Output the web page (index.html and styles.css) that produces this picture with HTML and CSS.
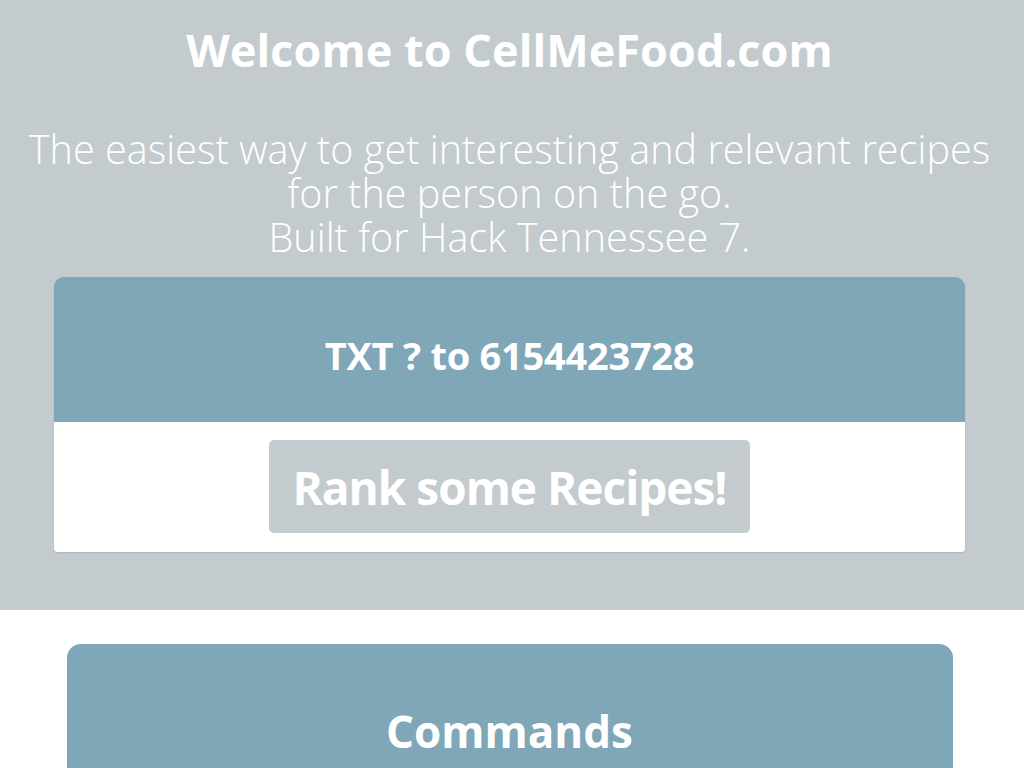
FILE: index.html
```html
<!DOCTYPE html>
<html lang="en">
<head>
<meta charset="utf-8">
<title>CellMeFood</title>
<link rel="stylesheet" href="styles.css">
</head>
<body>
  <header class="hero">
    <div class="hero-inner">
      <h1 class="hero-title">Welcome to CellMeFood.com</h1>
      <p class="hero-text">The easiest way to get interesting and relevant recipes<br>for the person on the go.<br>Built for Hack Tennessee 7.</p>
      <section class="card">
        <div class="card-head">TXT ? to 6154423728</div>
        <div class="card-body">
          <a class="rank-btn" href="#">Rank some Recipes!</a>
        </div>
      </section>
    </div>
  </header>
  <main class="content">
    <section class="commands">
      <h2 class="commands-title">Commands</h2>
    </section>
  </main>
</body>
</html>
```

FILE: styles.css
```css
html, body {
  margin: 0;
  padding: 0;
  background: #ffffff;
  font-family: "Open Sans", "Noto Sans", sans-serif;
  color: #ffffff;
  overflow: hidden;
}

.hero {
  background: #c3cbce;
  height: 610px;
}

.hero-inner {
  width: 1019px;
  display: flex;
  flex-direction: column;
  align-items: center;
}

.hero-title {
  margin: 0;
  padding-top: 19px;
  font-size: 45px;
  font-weight: 700;
  line-height: 62px;
  letter-spacing: 0.05px;
}

.hero-text {
  margin: 46px 0 0;
  text-align: center;
  font-size: 39.5px;
  font-weight: 300;
  line-height: 44px;
  letter-spacing: 0.05px;
}

.card {
  margin-top: 18px;
  width: 911px;
  border-radius: 10px 10px 4px 4px;
  overflow: hidden;
  box-shadow: 0 1px 2px rgba(0, 0, 0, 0.12);
}

.card-head {
  background: #80a7b8;
  height: 145px;
  display: flex;
  align-items: center;
  justify-content: center;
  font-size: 38px;
  font-weight: 700;
  letter-spacing: -0.25px;
  padding-top: 10px;
  box-sizing: border-box;
}

.card-body {
  background: #ffffff;
  height: 130px;
  display: flex;
  justify-content: center;
  padding-top: 18px;
  box-sizing: border-box;
}

.rank-btn {
  width: 481px;
  height: 93px;
  background: #c3cbce;
  border-radius: 5px;
  display: flex;
  align-items: center;
  justify-content: center;
  color: #ffffff;
  text-decoration: none;
  font-size: 46px;
  font-weight: 700;
  letter-spacing: -1px;
}

.content {
  width: 1019px;
  display: flex;
  justify-content: center;
  padding-top: 34px;
}

.commands {
  width: 886px;
  height: 200px;
  background: #80a7b8;
  border-radius: 14px 14px 0 0;
  display: flex;
  justify-content: center;
}

.commands-title {
  margin: 0;
  padding-top: 59px;
  font-size: 44px;
  font-weight: 700;
  line-height: 56px;
  letter-spacing: 0;
}
```
